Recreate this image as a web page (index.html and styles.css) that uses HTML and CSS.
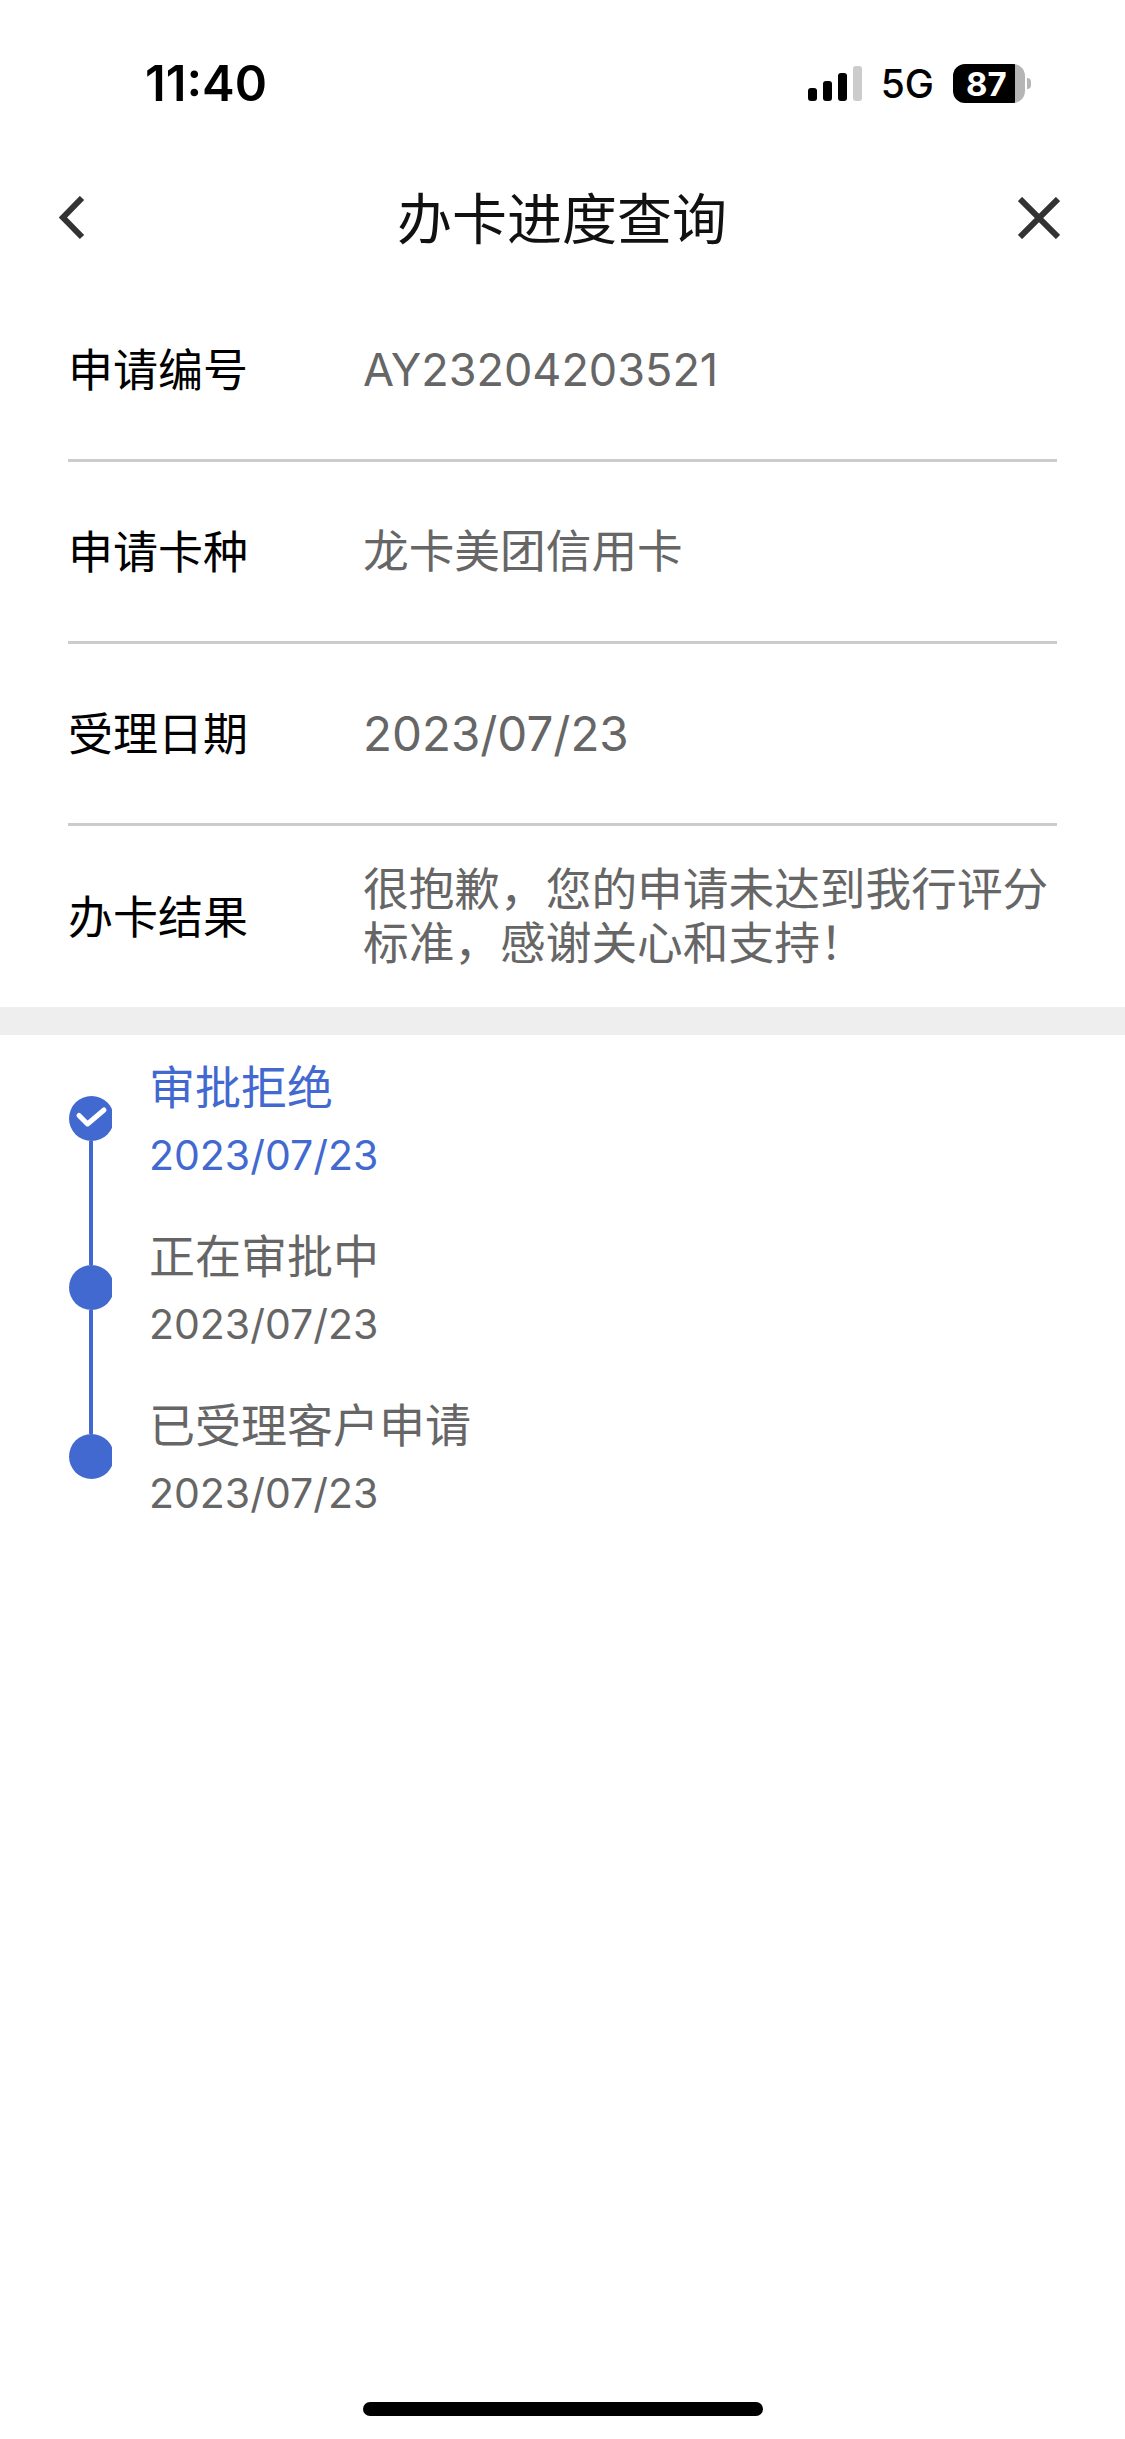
FILE: index.html
```html
<!DOCTYPE html>
<html lang="en">

<head>
  <meta charset="UTF-8">
  <meta name="viewport" content="width=device-width, initial-scale=1.0">
  <title>办卡进度查询</title>
  <link rel="stylesheet" href="styles.css">
</head>

<body>
  <div id="page">
    <div class="status-bar">
      <span class="time">11:40</span>
      <div class="status-right">
        <div class="signal">
          <span class="bar bar-1"></span>
          <span class="bar bar-2"></span>
          <span class="bar bar-3"></span>
          <span class="bar bar-4"></span>
        </div>
        <span class="network">5G</span>
        <div class="battery"><span>87</span></div>
        <span class="battery-nub"></span>
      </div>
    </div>

    <div class="nav">
      <svg class="nav-back" width="26" height="44" viewBox="0 0 26 44">
        <path d="M23 2 L4 21.5 L23 41" fill="none" stroke="#333" stroke-width="6" />
      </svg>
      <h1 class="nav-title">办卡进度查询</h1>
      <svg class="nav-close" width="42" height="42" viewBox="0 0 42 42">
        <path d="M2 2 L40 40 M40 2 L2 40" fill="none" stroke="#333" stroke-width="6" />
      </svg>
    </div>

    <div class="info">
      <div class="row">
        <span class="label">申请编号</span>
        <span class="value value-id">AY23204203521</span>
      </div>
      <div class="row">
        <span class="label">申请卡种</span>
        <span class="value">龙卡美团信用卡</span>
      </div>
      <div class="row">
        <span class="label">受理日期</span>
        <span class="value value-date">2023/07/23</span>
      </div>
      <div class="row">
        <span class="label">办卡结果</span>
        <span class="value">很抱歉，您的申请未达到我行评分标准，感谢关心和支持！</span>
      </div>
    </div>

    <div class="band"></div>

    <div class="timeline">
      <div class="step current">
        <div class="rail">
          <span class="line line-top"></span>
          <span class="dot">
            <svg width="45" height="45" viewBox="0 0 45 45">
              <path d="M10 19.5 L18.5 28 L35 14" fill="none" stroke="#fff" stroke-width="5" stroke-linecap="round" stroke-linejoin="round" />
            </svg>
          </span>
          <span class="line line-bottom"></span>
        </div>
        <div class="step-text">
          <div class="step-name">审批拒绝</div>
          <div class="step-date">2023/07/23</div>
        </div>
      </div>
      <div class="step">
        <div class="rail">
          <span class="line line-top"></span>
          <span class="dot"></span>
          <span class="line line-bottom"></span>
        </div>
        <div class="step-text">
          <div class="step-name">正在审批中</div>
          <div class="step-date">2023/07/23</div>
        </div>
      </div>
      <div class="step">
        <div class="rail">
          <span class="line line-top"></span>
          <span class="dot"></span>
          <span class="line line-bottom"></span>
        </div>
        <div class="step-text">
          <div class="step-name">已受理客户申请</div>
          <div class="step-date">2023/07/23</div>
        </div>
      </div>
    </div>

    <div class="home-bar"></div>
  </div>
</body>

</html>
```

FILE: styles.css
```css
body {
  margin: 0;
  background: #fff;
  overflow: hidden;
  font-family: Inter, "Noto Sans CJK SC", sans-serif;
}

#page {
  display: flex;
  flex-direction: column;
  height: 2439px;
}

/* status bar */
.status-bar {
  display: flex;
  justify-content: space-between;
  align-items: center;
  box-sizing: border-box;
  height: 157px;
  padding: 10px 94px 0 145px;
}

.time {
  font-size: 49px;
  font-weight: 600;
  color: #000;
}

.status-right {
  display: flex;
  align-items: center;
}

.signal {
  display: flex;
  align-items: flex-end;
  gap: 6px;
  height: 35px;
  margin-right: 19px;
}

.bar {
  width: 9px;
  border-radius: 3px;
  background: #000;
}

.bar-1 { height: 13px; }
.bar-2 { height: 20px; }
.bar-3 { height: 28px; }
.bar-4 { height: 35px; background: #ccc; }

.network {
  font-size: 39px;
  font-weight: 500;
  color: #000;
  margin-right: 19px;
}

.battery {
  display: flex;
  align-items: center;
  box-sizing: border-box;
  width: 72px;
  height: 39px;
  padding-left: 13px;
  border-radius: 12px;
  background: linear-gradient(to right, #000 62px, #b5b5b5 62px);
}

.battery span {
  font-size: 33px;
  font-weight: 700;
  color: #fff;
}

.battery-nub {
  width: 4px;
  height: 11px;
  margin-left: 2px;
  border-radius: 0 4px 4px 0;
  background: #b5b5b5;
}

/* nav */
.nav {
  display: grid;
  grid-template-columns: 1fr auto 1fr;
  align-items: center;
  height: 121px;
  padding: 0 60px 2px 59px;
}

.nav-close {
  justify-self: end;
  margin-right: 5px;
}

.nav-title {
  margin: 0;
  padding-bottom: 5px;
  font-size: 55px;
  font-weight: 400;
  color: #111;
}

/* info rows */
.info {
  padding: 0 68px;
}

.row {
  display: flex;
  align-items: center;
  height: 182px;
  box-sizing: border-box;
  border-bottom: 3px solid #ccc;
}

.row:last-child {
  height: 181px;
  border-bottom: 0;
}

.label {
  flex: none;
  width: 295px;
  padding-bottom: 5px;
  font-size: 45px;
  color: #000;
}

.value {
  font-size: 45.7px;
  line-height: 54px;
  color: #666;
}

.value-id {
  font-size: 45px;
}

.value-date {
  font-size: 47.5px;
}

.band {
  height: 28px;
  background: #eee;
}

/* timeline */
.timeline {
  padding-left: 69px;
}

.step {
  display: flex;
  height: 169px;
}

.rail {
  display: flex;
  flex-direction: column;
  flex: none;
  width: 43px;
  margin-right: 37px;
  overflow: hidden;
}

.line {
  width: 3.5px;
  margin-left: 20.25px;
  background: #4269cf;
}

.line-top {
  flex: none;
  height: 61px;
}

.line-bottom {
  flex: 1;
}

.step:first-child .line-top,
.step:last-child .line-bottom {
  visibility: hidden;
}

.dot {
  flex: none;
  display: block;
  width: 45px;
  height: 45px;
  border-radius: 50%;
  background: #4269cf;
}

.dot svg {
  display: block;
}

.step-text {
  padding-top: 18px;
  line-height: 68px;
  color: #666;
}

.step-name {
  font-size: 46px;
}

.step-date {
  font-size: 41px;
}

.current .step-text {
  color: #4269cf;
}

.home-bar {
  width: 400px;
  height: 14px;
  margin: auto auto 23px;
  border-radius: 7px;
  background: #000;
}
```
